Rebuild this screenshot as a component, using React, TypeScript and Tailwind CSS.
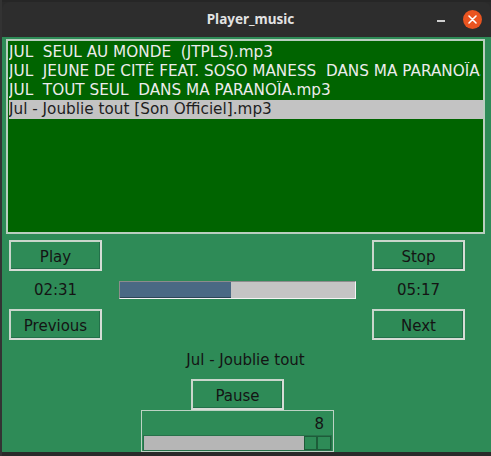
import React from "react";

const songs = [
  "JUL  SEUL AU MONDE  (JTPLS).mp3",
  "JUL  JEUNE DE CITÉ FEAT. SOSO MANESS  DANS MA PARANOÏA.mp3",
  "JUL  TOUT SEUL  DANS MA PARANOÏA.mp3",
  "Jul - Joublie tout [Son Officiel].mp3",
];

function Btn({ label, className = "" }: { label: string; className?: string }) {
  return (
    <div
      className={
        "w-[93px] h-[31px] flex items-center justify-center pt-[3px] border-2 border-t-[#c9d6cc] border-l-[#c9d6cc] border-b-[#d6dcd6] border-r-[#d6dcd6] shadow-[inset_-1px_-1px_0_#23704a] text-[15px] text-[#141414] " +
        className
      }
    >
      {label}
    </div>
  );
}

export default function App() {
  return (
    <div
      className="w-[491px] h-[456px] bg-[#2a2a2a] flex overflow-hidden"
      style={{ fontFamily: '"DejaVu Sans", sans-serif' }}
    >
      <div className="w-[2px] h-full bg-[#333333]" />
      <div className="flex flex-col w-[489px]">
        <div className="h-[2px] bg-[#262626]" />
        <div className="h-[35px] bg-[#2d2d2d] rounded-tl-[8px] rounded-tr-[8px] flex items-center relative">
          <div
            className="flex-1 text-center text-[13.5px] font-bold text-[#e2e2e2] pl-[8px]"
            style={{ fontFamily: '"Noto Sans", sans-serif' }}
          >
            Player_music
          </div>
          <div className="absolute left-[435px] top-[18px] w-[8px] h-[1.5px] bg-[#cfcfcf]" />
          <div className="absolute left-[461px] top-[8px] w-[19px] h-[19px] rounded-full bg-[#e95420] flex items-center justify-center">
            <svg width="9" height="9" viewBox="0 0 9 9">
              <path d="M1 1 L8 8 M8 1 L1 8" stroke="#ffffff" strokeWidth="1.6" strokeLinecap="round" />
            </svg>
          </div>
        </div>
        <div className="h-[415px] bg-[#2e8b57] flex flex-col">
          {/* listbox */}
          <div className="mt-[2px] ml-[4px] w-[479px] h-[195px] border-2 border-[#b9cebf] bg-[#006400] pt-[2px] pl-[1px] pr-[2px] overflow-hidden">
            {songs.map((s, i) => (
              <div
                key={i}
                className={
                  "h-[19px] leading-[19px] text-[15.25px] whitespace-pre overflow-hidden " +
                  (i === 3 ? "bg-[#c3c3c3] text-[#1e1e1e] -mr-[2px]" : "text-[#ececec]")
                }
              >
                {s}
              </div>
            ))}
          </div>
          {/* row 1 */}
          <div className="flex mt-[6px] pl-[7px]">
            <Btn label="Play" />
            <div className="w-[270px]" />
            <Btn label="Stop" />
          </div>
          {/* row 2 */}
          <div className="flex pl-[7px] h-[38px] items-center">
            <div className="w-[93px] text-center text-[15px] text-[#141414]">02:31</div>
            <div className="ml-[17px] w-[237px] h-[18px] border border-t-[#8c8c8c] border-l-[#8c8c8c] border-b-[#f4f4f4] border-r-[#f4f4f4] bg-[#c4c4c4] flex">
              <div className="w-[111px] h-full bg-[#4a6984] border-b border-[#2d4456]" />
            </div>
            <div className="ml-[16px] w-[93px] text-center text-[15px] text-[#141414]">05:17</div>
          </div>
          {/* row 3 */}
          <div className="flex pl-[7px]">
            <Btn label="Previous" />
            <div className="w-[270px]" />
            <Btn label="Next" />
          </div>
          <div className="mt-[10px] h-[20px] leading-[20px] pl-[118px] w-[369px] text-center text-[15px] text-[#141414]">
            Jul - Joublie tout
          </div>
          <div className="mt-[9px] ml-[189px]">
            <Btn label="Pause" />
          </div>
          <div className="ml-[139px] w-[193px] h-[42px] border border-[#bcd2c4] flex flex-col">
            <div className="h-[24px] flex items-center justify-end pr-[9px] pt-[3px] text-[15px] text-[#141414]">8</div>
            <div className="flex-1 mx-[1px] border border-[#27714a] bg-[#b6b6b6] flex justify-end">
              <div className="w-[13px] h-full bg-[#2e8b57] border border-[#1d5c39]" />
              <div className="w-[14px] h-full bg-[#2e8b57] border border-[#1d5c39]" />
            </div>
          </div>
        </div>
        <div className="flex-1 bg-[#2a2a2a]" />
      </div>
    </div>
  );
}
